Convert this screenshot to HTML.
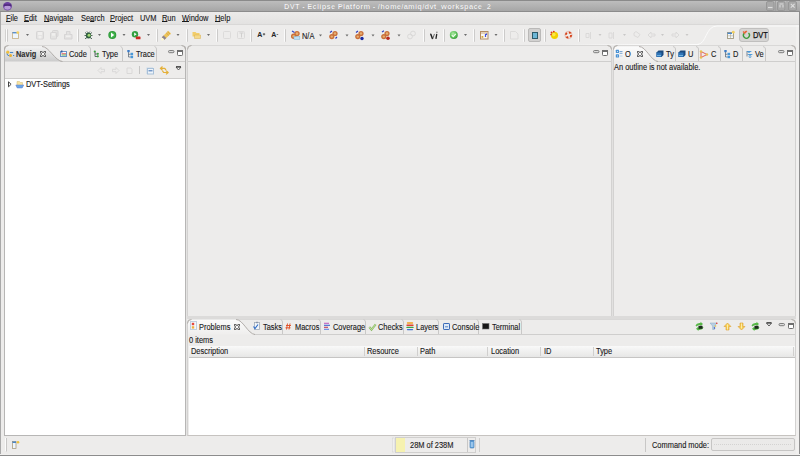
<!DOCTYPE html>
<html><head><meta charset="utf-8">
<style>
*{box-sizing:border-box}
html,body{margin:0;padding:0}
body{width:800px;height:456px;overflow:hidden;position:relative;background:#edeceb;font-family:"Liberation Sans",sans-serif;font-size:7.3px;color:#2a2a2a}
.a{position:absolute}
.t{position:absolute;white-space:pre;line-height:8px;font-size:8.5px;transform:scaleX(0.875);transform-origin:0 0;color:#1a1a1a;-webkit-text-stroke:0.12px #1a1a1a}
u{text-decoration-thickness:1px;text-underline-offset:0px}
#title{left:0;top:0;width:800px;height:12px;background:linear-gradient(#bdbdbd,#a6a6a6);border-top:1px solid #8a8a8a;border-bottom:1px solid #8c8c8c}
#menubar{left:1px;top:12px;width:798px;height:12px;background:linear-gradient(#ecebea,#e3e2e1)}
.sep{position:absolute;width:2px;height:13px;top:28.5px;border-left:1px solid #fbfbfb;border-right:1px solid #cccbca;border-radius:1px}
.panel{position:absolute;border:1px solid #d3d2d1;border-top-color:#d9d8d7;border-radius:4px 4px 0 0}
.tabsep{position:absolute;height:1px;background:#cfcecd}
.vt{position:absolute;width:1px;background:#c9c8c7;top:47px;height:14px;border-radius:1px 1px 0 0}
.white{position:absolute;background:#fff}
svg{position:absolute;left:0;top:0}
</style></head><body>

<!-- window border -->
<div class="a" style="left:0;top:0;width:1px;height:456px;background:#a9a9a9"></div>
<div class="a" style="left:799px;top:0;width:1px;height:456px;background:#8e8e8e"></div>
<div class="a" style="left:0;top:454px;width:800px;height:1px;background:#f0efee"></div><div class="a" style="left:0;top:455px;width:800px;height:1px;background:#8c8c8c"></div><div class="a" style="left:796px;top:25px;width:3px;height:429px;background:#f1f0ef"></div>

<!-- title bar -->
<div id="title" class="a"></div>
<div class="t" style="left:284px;top:3px;font-size:7.5px;font-weight:bold;letter-spacing:0.27px;transform:none;color:#f4f4f4;-webkit-text-stroke:0;text-shadow:0 0 0.6px #6a6a6a">DVT - Eclipse Platform - /home/amiq/dvt_workspace_2</div>

<!-- menubar -->
<div id="menubar" class="a"></div>
<div class="a" style="left:1px;top:24px;width:798px;height:1px;background:#d9d8d7"></div>
<div class="t" style="left:6px;top:14px"><u>F</u>ile</div>
<div class="t" style="left:24px;top:14px"><u>E</u>dit</div>
<div class="t" style="left:44px;top:14px"><u>N</u>avigate</div>
<div class="t" style="left:81px;top:14px">Se<u>a</u>rch</div>
<div class="t" style="left:110px;top:14px"><u>P</u>roject</div>
<div class="t" style="left:140px;top:14px">UVM</div>
<div class="t" style="left:162px;top:14px"><u>R</u>un</div>
<div class="t" style="left:182px;top:14px"><u>W</u>indow</div>
<div class="t" style="left:215px;top:14px"><u>H</u>elp</div>

<!-- toolbar -->
<div class="a" style="left:560px;top:44px;width:139px;height:1px;background:linear-gradient(90deg,rgba(251,251,251,0),#fbfbfb 70%)"></div>
<div class="sep" style="left:5px;width:3px;border-left-color:#d2d1d0;background:#fbfbfb"></div>
<div class="sep" style="left:77px"></div>
<div class="sep" style="left:156px"></div>
<div class="sep" style="left:186px"></div>
<div class="sep" style="left:216px"></div>
<div class="sep" style="left:250px"></div>
<div class="sep" style="left:284px"></div>
<div class="sep" style="left:423px"></div>
<div class="sep" style="left:443px"></div>
<div class="sep" style="left:473px"></div>
<div class="sep" style="left:503px"></div>
<div class="sep" style="left:523px"></div>
<div class="sep" style="left:544px"></div>
<div class="sep" style="left:578px"></div>
<div class="a" style="left:528px;top:28px;width:13px;height:14px;background:#d2d1d0;border:1px solid #bab9b8;border-radius:2px"></div>
<div class="a" style="left:739px;top:28px;width:30px;height:14px;background:#d6d5d4;border:1px solid #c0bfbe;border-radius:3px"></div>
<div class="t" style="left:753px;top:31px;color:#111;-webkit-text-stroke:0.25px #111">DVT</div>
<div class="t" style="left:302px;top:32px">N/A</div>

<!-- navigator panel -->
<div class="panel" style="left:4px;top:45px;width:182px;height:391px;border-color:#b7b6b5;border-top-color:#d9d8d7"></div>
<div class="tabsep" style="left:60px;top:61px;width:125px"></div>
<div class="tabsep" style="left:5px;top:78px;width:180px"></div>
<div class="white" style="left:5px;top:79px;width:180px;height:356px"></div>

<!-- editor panel -->
<div class="panel" style="left:187px;top:45px;width:425px;height:272px"></div>
<div class="tabsep" style="left:188px;top:61px;width:423px"></div>

<!-- outline panel -->
<div class="panel" style="left:613px;top:45px;width:183px;height:272px"></div>
<div class="tabsep" style="left:656px;top:61px;width:139px"></div>

<!-- problems panel -->
<div class="panel" style="left:187px;top:319px;width:609px;height:117px;border-bottom-color:#c6c3c0"></div>
<div class="tabsep" style="left:254px;top:334px;width:541px"></div>
<div class="a" style="left:189px;top:346px;width:606px;height:12px;background:linear-gradient(#f9f9f9,#e7e7e6);border-bottom:1px solid #c6c5c4"></div>
<div class="white" style="left:189px;top:358px;width:606px;height:77px"></div>
<div class="a" style="left:612px;top:50px;width:1px;height:267px;background:#e2e1e0"></div>
<div class="a" style="left:187px;top:316px;width:609px;height:3px;background:#dcdbda"></div>
<div class="a" style="left:186px;top:50px;width:1px;height:386px;background:#e4e3e2"></div>


<!-- ICONS -->
<svg width="800" height="456" viewBox="0 0 800 456">
<!-- eclipse logo -->
<circle cx="7.5" cy="6.3" r="4.3" fill="#6b3fa0"/>
<ellipse cx="7.5" cy="7.6" rx="3.2" ry="2.2" fill="#b69bd8"/>
<rect x="3.5" y="4.6" width="8" height="1" fill="#3e1a66"/>
<!-- window buttons -->
<g fill="#a9a9a9" stroke="#979797" stroke-width="1">
<rect x="766.5" y="1.5" width="7.5" height="9" rx="1.5"/>
<rect x="777.5" y="1.5" width="7.5" height="9" rx="1.5"/>
<rect x="788.5" y="1.5" width="8" height="9" rx="1.5"/>
</g>
<g stroke="#a0a0a0"><path d="M775.5 1v10M787 1v10"/></g>
<g stroke="#dedede" stroke-width="1" fill="none">
<path d="M768 7.5h4.5" stroke-width="1.2"/>
<path d="M779.5 4h4M780 5v2.5M783 5v2.5" stroke-width="1"/>
<path d="M790.8 3.8l3.8 3.8M794.6 3.8l-3.8 3.8" stroke-width="1.1"/>
</g>

<!-- dropdown arrows -->
<g fill="#6c6c6c">
<path d="M26 34h3l-1.5 2z"/><path d="M98 34h3l-1.5 2z"/><path d="M122.5 34h3l-1.5 2z"/><path d="M147 34h3l-1.5 2z"/>
<path d="M176.5 34h3l-1.5 2z"/><path d="M207 34h3l-1.5 2z"/><path d="M319 34.5h3l-1.5 2z"/><path d="M345.5 34.5h3l-1.5 2z"/>
<path d="M371.5 34.5h3l-1.5 2z"/><path d="M397.5 34.5h3l-1.5 2z"/><path d="M464 34h3l-1.5 2z"/><path d="M494.5 34h3l-1.5 2z"/>
</g>
<g fill="#c9c8c7">
<path d="M598.5 34h3l-1.5 2z"/><path d="M623 34h3l-1.5 2z"/><path d="M661 34h3l-1.5 2z"/><path d="M685.5 34h3l-1.5 2z"/>
</g>

<!-- new -->
<rect x="12.5" y="32.5" width="6" height="6" fill="#eef6fc" stroke="#cbb892" stroke-width="0.9"/>
<rect x="12.5" y="32" width="4.5" height="1.4" fill="#5a90cc"/>
<circle cx="17.8" cy="32.6" r="1.4" fill="#f2d060"/>
<!-- save/saveall/print disabled -->
<g fill="#e4e3e2" stroke="#d4d3d2" stroke-width="0.9">
<rect x="36.5" y="31.5" width="7" height="7.5" rx="0.8"/>
<rect x="52.5" y="30.5" width="5.5" height="6" rx="0.8"/>
<rect x="50.5" y="32.5" width="6" height="6.5" rx="0.8"/>
<path d="M64.5 34.5h7.5v4.5h-7.5z"/><path d="M66.5 34.5v-3h3.5v3"/>
</g>
<g fill="#f0efee"><rect x="38" y="32" width="4" height="3"/><rect x="38.5" y="36" width="3" height="2.5"/><rect x="52" y="33.2" width="3" height="2.5"/><rect x="66" y="35.5" width="4.5" height="1.5"/></g>
<!-- debug -->
<g stroke="#2e4a3a" stroke-width="0.8"><path d="M85 32.5l2 1.5M92 32.5l-2 1.5M84.5 35.5h2M92.5 35.5h-2M85 38.8l2-1.3M92 38.8l-2-1.3M87 31.5l1 1.2M90 31.5l-1 1.2"/></g>
<ellipse cx="88.5" cy="35.6" rx="2.6" ry="3" fill="#2f5e40"/>
<circle cx="89" cy="35.3" r="1.5" fill="#a6dc78"/>
<!-- run -->
<circle cx="112.3" cy="35" r="4" fill="#2f9a3a"/>
<circle cx="112.3" cy="35" r="3" fill="#3fb04a"/>
<path d="M111 32.6v4.8l3.2-2.4z" fill="#fff"/>
<!-- ext tools -->
<circle cx="135" cy="34.3" r="3.2" fill="#33a040"/>
<path d="M134.2 32.6v3.4l2.4-1.7z" fill="#fff"/>
<rect x="135.8" y="36.4" width="4.7" height="2.9" rx="0.6" fill="#cc2a22"/>
<!-- wand -->
<path d="M164.5 39.8L161.8 37.2L168.3 30.8L171 33.4Z" fill="#eec55a"/>
<path d="M166.2 32.9l2.7 2.6M167.5 31.6l2.7 2.6" stroke="#c8963a" stroke-width="0.6"/>
<path d="M164.5 39.8L161.8 37.2L163.6 35.4L166.3 38Z" fill="#8c8494"/>
<circle cx="162.3" cy="39.2" r="1.3" fill="#fffad0"/>
<!-- folder -->
<path d="M192.5 32h3l1 1h3v3.5h-7z" fill="#f2cd6a"/>
<path d="M194.5 35h6v3.5h-6z" fill="#f5d98a" stroke="#d9b050" stroke-width="0.5"/>
<!-- disabled 223, 237 -->
<rect x="223.5" y="31.5" width="7" height="7" rx="1" fill="none" stroke="#dcdbda"/>
<rect x="237.5" y="31.5" width="7" height="7" rx="1" fill="none" stroke="#dcdbda"/>
<path d="M239.5 33h4M241.5 33v4.5" stroke="#d0cfce"/>
<!-- dvt cookies -->
<g id="ck">
<circle cx="297" cy="33.6" r="2.7" fill="#c9703c"/><circle cx="297" cy="33.6" r="1.3" fill="#e6b070"/>
<circle cx="293.7" cy="36.2" r="2.7" fill="#c9703c"/><circle cx="293.7" cy="36.2" r="1.3" fill="#e6b070"/>
</g>
<rect x="294" y="36.5" width="5.8" height="2.8" fill="#bfe0f4" stroke="#7eb3d6" stroke-width="0.5"/>
<path d="M292 31l2.5 1.5" stroke="#3048c8" stroke-width="1.2"/>
<!-- cookie icons -->
<g fill="#c9703c">
<circle cx="335" cy="33.5" r="2.6"/><circle cx="331.8" cy="36.6" r="2.6"/>
<circle cx="361" cy="33.5" r="2.6"/><circle cx="357.8" cy="36.6" r="2.6"/>
<circle cx="387" cy="33.5" r="2.6"/><circle cx="383.8" cy="36.6" r="2.6"/>
</g>
<g fill="#e6b070">
<circle cx="335" cy="33.5" r="1.2"/><circle cx="331.8" cy="36.6" r="1.2"/>
<circle cx="361" cy="33.5" r="1.2"/><circle cx="357.8" cy="36.6" r="1.2"/>
<circle cx="387" cy="33.5" r="1.2"/><circle cx="383.8" cy="36.6" r="1.2"/>
</g>
<g stroke="#3040c0" stroke-width="1.2">
<path d="M330 32.5l2-1.5M335.5 38.5l1.5-1.5M356 32.5l2-1.5M382 32l2-1.2"/>
</g>
<circle cx="362" cy="38.5" r="1.7" fill="#1a2aa0"/>
<circle cx="388" cy="38.3" r="1.8" fill="#b8281e"/>
<g fill="none" stroke="#dad9d8"><circle cx="413" cy="33.5" r="2.4"/><circle cx="410" cy="36.5" r="2.4"/></g>
<!-- A+ A- -->
<text x="257.3" y="37.3" font-family="Liberation Sans" font-weight="bold" font-size="7" fill="#262626">A</text>
<path d="M262.8 34.2h2.4M264 33v2.4" stroke="#404040" stroke-width="0.8"/>
<text x="271.3" y="37.3" font-family="Liberation Sans" font-weight="bold" font-size="7" fill="#262626">A</text>
<path d="M276.6 34.5h1.6" stroke="#555" stroke-width="0.8"/>
<!-- vi -->
<g stroke-linecap="round"><path d="M430.8 34.2L432.4 38.4" stroke="#222" stroke-width="1.5"/><path d="M434.3 34.3L432.9 38.4" stroke="#444" stroke-width="0.8"/>
<path d="M436.7 34.3L436 38.4" stroke="#222" stroke-width="1.3"/></g><circle cx="436.9" cy="32.2" r="0.7" fill="#777"/>
<!-- check -->
<defs><radialGradient id="gchk" cx="0.4" cy="0.35" r="0.7"><stop offset="0" stop-color="#b0eca8"/><stop offset="0.6" stop-color="#5cc058"/><stop offset="1" stop-color="#3a9a3a"/></radialGradient></defs>
<circle cx="453.8" cy="35" r="4" fill="url(#gchk)"/>
<path d="M451.8 35.2l1.4 1.4 2.6-2.8" stroke="#f4fff0" stroke-width="1.1" fill="none"/>
<!-- box -->
<rect x="480.5" y="31.5" width="7.5" height="7.5" fill="#fbf7ef" stroke="#b48c64"/>
<path d="M481 33h6.5" stroke="#caa880"/>
<path d="M485.5 34v3M486.5 33.5v1.5" stroke="#4050e0" stroke-width="1.2"/>
<rect x="481.5" y="36" width="1.8" height="1.8" fill="#d8a838"/>
<!-- disabled doc -->
<path d="M510.5 31.5h5l2.5 2.5v5h-7.5z" fill="none" stroke="#dcdbda"/>
<!-- pressed icon -->
<rect x="532" y="32" width="6" height="7" fill="#2c5a6a"/>
<rect x="533" y="33" width="4" height="5" fill="#6cb6d6"/>
<!-- sun -->
<circle cx="554.5" cy="35.3" r="3.6" fill="#f2d000"/>
<circle cx="553.8" cy="34.6" r="1.8" fill="#fbe84a"/>
<circle cx="551.5" cy="32.5" r="0.9" fill="#d83020"/><circle cx="553.8" cy="31.6" r="0.9" fill="#d83020"/><circle cx="551" cy="34.6" r="0.8" fill="#d83020"/>
<!-- lifebuoy -->
<circle cx="568.5" cy="35" r="2.6" fill="none" stroke="#f4e8e0" stroke-width="1.8"/>
<circle cx="568.5" cy="35" r="2.6" fill="none" stroke="#d4421a" stroke-width="1.9" stroke-dasharray="2.1 2"/>
<circle cx="568.5" cy="35" r="3.6" fill="none" stroke="#c84020" stroke-width="0.5" opacity="0.6"/>
<!-- disabled nav icons -->
<g fill="none" stroke="#d9d8d7" stroke-width="0.9">
<path d="M586 33.5h3v4h-3zM590.5 32v7"/>
<path d="M609 33h3v5h-3zM613.5 32v7"/>
<path d="M634 33l2-1.5 4 3-2 3-4-2z"/>
<path d="M648 35l3-3v2h4v2h-4v2z"/>
<path d="M679 35l-3-3v2h-4v2h4v2z"/>
</g>
<!-- perspective curve -->
<path d="M697 44.5C707 44.5 705 26 717 26H799" fill="none" stroke="#fbfbfb" stroke-width="1"/>
<!-- open perspective -->
<rect x="727.5" y="32.5" width="6" height="6" fill="#f4f7fa" stroke="#a09a80" stroke-width="0.9"/>
<path d="M727.5 33.3h4.5" stroke="#4a88cc" stroke-width="1.4"/>
<path d="M730.5 34v4.5M728 35.8h5" stroke="#b0aa90" stroke-width="0.6"/>
<circle cx="733.3" cy="32.2" r="1.4" fill="#f2d060"/>
<!-- dvt persp icon -->
<path d="M744.2 33.2A3 3 0 1 0 748.5 33" fill="none" stroke="#3c9a38" stroke-width="1.3"/>
<path d="M743 31.5l1.8 1.9 0.6-2.5M745.5 32.5l1.5-1.6" stroke="#e8663a" stroke-width="1.1" fill="none"/>
</svg>


<svg width="800" height="456" viewBox="0 0 800 456">
<defs>
<linearGradient id="gsel" x1="0" y1="0" x2="0" y2="1"><stop offset="0" stop-color="#f3f3f3"/><stop offset="1" stop-color="#cbcbcb"/></linearGradient>
<linearGradient id="gsel2" x1="0" y1="0" x2="0" y2="1"><stop offset="0" stop-color="#fbfbfb"/><stop offset="1" stop-color="#efeeed"/></linearGradient>
</defs>
<!-- NAVIGATOR selected tab -->
<path d="M5 61.5V50Q5 46.5 8.5 46.5H42C49 46.5 55 61 62.5 61.5Z" fill="url(#gsel)"/>
<path d="M42 46.5C49 46.5 55 61 62.5 61.5" fill="none" stroke="#a9a5a1" stroke-width="0.9"/>
<!-- tab borders -->
<g fill="none" stroke="#c9c8c7" stroke-width="1">
<path d="M90.5 61V49Q90.5 47 88.5 46.5"/>
<path d="M122.5 61V49Q122.5 47 120.5 46.5"/>
<path d="M156.5 61V49Q156.5 47 154.5 46.5"/>
<path d="M675.5 61V49Q675.5 47 673 46.5"/>
<path d="M698.5 61V49Q698.5 47 696 46.5"/>
<path d="M720.5 61V49Q720.5 47 718 46.5"/>
<path d="M742.5 61V49Q742.5 47 740 46.5"/>
<path d="M765.5 61V49Q765.5 47 763 46.5"/>
<path d="M282.5 334V322Q282.5 320 280.5 319.5"/>
<path d="M320.5 334V322Q320.5 320 318.5 319.5"/>
<path d="M365.5 334V322Q365.5 320 363.5 319.5"/>
<path d="M403.5 334V322Q403.5 320 401.5 319.5"/>
<path d="M438.5 334V322Q438.5 320 436.5 319.5"/>
<path d="M478.5 334V322Q478.5 320 476.5 319.5"/>
<path d="M521.5 334V322Q521.5 320 519.5 319.5"/>
</g>
<!-- OUTLINE selected tab -->
<path d="M614 61.5V50Q614 46.5 617.5 46.5H639C646 46.5 651 61 658 61.5Z" fill="url(#gsel2)"/>
<path d="M639 46.5C646 46.5 651 61 658 61.5" fill="none" stroke="#a9a5a1" stroke-width="0.9"/>
<!-- PROBLEMS selected tab -->
<path d="M188 334.5V323Q188 319.5 191.5 319.5H236C243 319.5 248 334 255 334.5Z" fill="url(#gsel2)"/>
<path d="M236 319.5C243 319.5 248 334 255 334.5" fill="none" stroke="#a9a5a1" stroke-width="0.9"/>

<g fill="none" stroke="#aaa6a2" stroke-width="0.9">
<path d="M4.5 49.5Q4.5 45.5 8.5 45.5"/><path d="M181.5 45.5Q185.5 45.5 185.5 49.5"/>
<path d="M187.5 49.5Q187.5 45.5 191.5 45.5"/><path d="M607.5 45.5Q611.5 45.5 611.5 49.5"/>
<path d="M613.5 49.5Q613.5 45.5 617.5 45.5"/><path d="M791.5 45.5Q795.5 45.5 795.5 49.5"/>
<path d="M187.5 323.5Q187.5 319.5 191.5 319.5"/><path d="M791.5 319.5Q795.5 319.5 795.5 323.5"/>
</g>
<!-- min/max buttons -->
<g fill="#dcdcdc" stroke="#727272" stroke-width="0.9">
<rect x="168.5" y="50.5" width="5.5" height="2.2" rx="1.1"/>
<rect x="593.5" y="50.5" width="5.5" height="2.2" rx="1.1"/>
<rect x="778.5" y="50.5" width="5.5" height="2.2" rx="1.1"/>
<rect x="779" y="323.5" width="5.5" height="2.2" rx="1.1"/>
</g>
<g fill="#fff" stroke="#6e6e6e" stroke-width="1">
<rect x="177.5" y="50.5" width="5" height="5" rx="0.8"/>
<rect x="602.5" y="50.5" width="5" height="5" rx="0.8"/>
<rect x="787.5" y="50.5" width="5" height="5" rx="0.8"/>
<rect x="788.5" y="323.5" width="5" height="5" rx="0.8"/>
</g>
<g fill="#6e6e6e">
<rect x="177" y="50" width="6" height="2"/><rect x="602" y="50" width="6" height="2"/><rect x="787" y="50" width="6" height="2"/><rect x="788" y="323" width="6" height="2"/>

</g>
<path d="M176 67h5l-2.5 3z" fill="#fafafa" stroke="#4a4a4a" stroke-width="0.9" stroke-linejoin="round"/>
<path d="M176 66.8h5" stroke="#3a3a3a" stroke-width="1.1"/>
<path d="M766.5 323h5l-2.5 3z" fill="#fafafa" stroke="#4a4a4a" stroke-width="0.9" stroke-linejoin="round"/>
<path d="M766.5 322.8h5" stroke="#3a3a3a" stroke-width="1.1"/>
<!-- close X icons -->
<defs><g id="cx">
<path d="M0 0h2v1h-1v1h-1zM4 0h2v2h-1v-1h-1zM0 4h1v1h1v1h-2zM5 4h1v2h-2v-1h1z" fill="#666"/>
<path d="M2 0h2v1h-2zM2 5h2v1h-2zM0 2h1v2h-1zM5 2h1v2h-1z" fill="#b4b4b4"/>
<path d="M2 1h2v1h-2zM2 4h2v1h-2zM1 2h1v2h-1zM4 2h1v2h-1z" fill="#7c7c7c"/>
<path d="M1 1h1v1h-1zM4 1h1v1h-1zM1 4h1v1h-1zM4 4h1v1h-1z" fill="#d8d8d8"/>
<path d="M2 2h2v2h-2z" fill="#fafafa"/>
</g></defs>
<use href="#cx" x="40" y="51"/><use href="#cx" x="637" y="51"/><use href="#cx" x="234" y="324"/>
<!-- navig icon -->
<circle cx="7.8" cy="52.2" r="1.6" fill="#f0c040"/>
<path d="M10 52.5h3.2" stroke="#4a88c8" stroke-width="1.1"/>
<path d="M7 53.5q0 2 2 2.2" stroke="#4a88c8" stroke-width="1" fill="none"/>
<circle cx="10.5" cy="55.6" r="1.5" fill="#e8b030"/>
<rect x="13" y="55" width="1.2" height="1" fill="#4a88c8"/>
<!-- code icon -->
<rect x="60.5" y="51.5" width="6" height="5" fill="#f8fbff" stroke="#6a94c8"/>
<rect x="61" y="50.5" width="1.5" height="2" fill="#3a5a9a"/>
<path d="M61.5 53.8h4.5" stroke="#e05050"/><path d="M61.5 55h4.5" stroke="#60b060"/>
<!-- type icon -->
<circle cx="94.8" cy="51.5" r="1.1" fill="#3ca040"/><circle cx="97.8" cy="53.8" r="1.1" fill="#3ca040"/><circle cx="97.8" cy="56.3" r="1.1" fill="#3ca040"/>
<path d="M95 52v4.5h2M95 54h2" stroke="#304040" stroke-width="0.7" fill="none"/>
<!-- trace icon -->
<path d="M128.5 52v5h2M128.5 54.3h2" stroke="#506070" stroke-width="0.7" fill="none"/>
<rect x="127.3" y="50" width="2.4" height="2.2" fill="#3c7cc8"/><rect x="130.5" y="52.8" width="2.6" height="2.4" fill="#4a98d8"/><rect x="130.5" y="55.8" width="2.6" height="2.4" fill="#4a98d8"/>

<!-- nav view toolbar -->
<g fill="none" stroke="#d8d7d6" stroke-width="0.9">
<path d="M98 70.5l3-3v1.8h3.5v2.4h-3.5v1.8z"/>
<path d="M119 70.5l-3-3v1.8h-3.5v2.4h3.5v1.8z"/>
<path d="M127 68h4l1 1.5v4h-5z"/>
</g>
<path d="M139.5 66v8" stroke="#c6c5c4"/>
<rect x="146.5" y="67.5" width="6.5" height="6.5" fill="#c8d8e8"/>
<rect x="147.5" y="68.5" width="6" height="5.5" fill="#eef4fa" stroke="#a8c0d8"/>
<path d="M148.5 70.8h4" stroke="#4a7ab8" stroke-width="1.1"/>
<g fill="none" stroke="#e4b038" stroke-width="1.2" stroke-linejoin="round">
<path d="M162.5 66.5L160.3 68.4L162.5 70.2M160.8 68.4H164.8L166 70.2"/>
<path d="M166 70.6L168.2 72.5L166 74.4M167.7 72.5H163.6L162.4 70.6"/>
</g>

<!-- tree -->
<path d="M8.5 81.8v5l2.6-2.5z" fill="#fff" stroke="#303030" stroke-width="0.9"/>
<path d="M17 81.5h2.5l1 1h2v4h-5.5z" fill="#f8e4a0" stroke="#d0b870" stroke-width="0.5"/>
<path d="M15.8 85h8l-1.6 3h-5z" fill="#6aa8e8" stroke="#6a7ec8" stroke-width="0.5"/>

<!-- outline tabs icons -->
<g fill="#4a92d4">
<rect x="615.8" y="49.8" width="3.2" height="3.2" rx="0.5"/><rect x="615.8" y="54.3" width="3.2" height="3.2" rx="0.5"/>
</g>
<rect x="617" y="51" width="0.9" height="0.9" fill="#e8f4ff"/><rect x="617" y="55.5" width="0.9" height="0.9" fill="#e8f4ff"/>
<path d="M619.5 51.5h3M619.5 53.3h3" stroke="#5a92cc" stroke-width="0.8"/><path d="M619.5 56h3" stroke="#a8c8e8" stroke-width="0.8"/>
<g>
<path d="M656.5 52.5l2-2h5v4.5l-2 2h-5z" fill="#1a4a80"/><path d="M656.5 52.5h5v4.5h-5z" fill="#2f74b8"/><path d="M657 55.5h4" stroke="#7fc0e8" stroke-width="0.8"/>
<path d="M678.5 52.5l2-2h5v4.5l-2 2h-5z" fill="#1a4a80"/><path d="M678.5 52.5h5v4.5h-5z" fill="#2f74b8"/><path d="M679 55.5h4" stroke="#7fc0e8" stroke-width="0.8"/>
</g>
<path d="M701 51.5l6 3-6 3z" fill="none" stroke="#e04030" stroke-width="0.8"/>
<circle cx="701" cy="51.5" r="1.2" fill="#e8c050"/><circle cx="707" cy="54.5" r="1.2" fill="#e8c050"/><circle cx="701" cy="57.5" r="1.2" fill="#e8c050"/>
<path d="M725.5 52v5h2M725.5 54.3h2" stroke="#506070" stroke-width="0.7" fill="none"/>
<rect x="724.3" y="50" width="2.4" height="2.2" fill="#3c7cc8"/><rect x="727.5" y="52.8" width="2.6" height="2.4" fill="#4a98d8"/><rect x="727.5" y="55.8" width="2.6" height="2.4" fill="#4a98d8"/>
<path d="M746 51h6l-3 2z M747 54h6l-3 2z M748 56.5h4l-2 1.5z" fill="#4a98d8"/>
<path d="M747 51.5v5" stroke="#506070" stroke-width="0.7"/>

<!-- problems tab icons -->
<rect x="190.5" y="321.5" width="6" height="8" fill="#f4f7fa" stroke="#c0d0e0"/>
<rect x="191.8" y="322.8" width="2.4" height="2.4" fill="#e4483c"/><rect x="191.8" y="326.2" width="2.4" height="2.4" fill="#f2b040"/>
<rect x="254.5" y="322.5" width="5" height="7" fill="#f2f6fa" stroke="#a0aab8" stroke-width="0.8"/>
<rect x="256" y="321.8" width="2" height="1.4" fill="#8a96a8"/>
<path d="M253.5 326.5l1.5 2 3-4" stroke="#2a6ac8" stroke-width="1.1" fill="none"/>
<g stroke="#e04a20" stroke-width="0.9"><path d="M287.5 323.5l-1 6M290 323.5l-1 6M286 325.5h5M285.5 327.8h5"/></g>
<g stroke-width="1.1"><path d="M324 323.3h5" stroke="#c060c0"/><path d="M324 325.3h6" stroke="#4060d0"/><path d="M324 327.3h4" stroke="#c04060"/><path d="M324 329.3h5" stroke="#6080e0"/></g>
<path d="M369.3 327l2.2 2.6 4.2-5.2" stroke="#88b860" stroke-width="2" fill="none"/><path d="M369.3 327l2.2 2.6 4.2-5.2" stroke="#d8f0c0" stroke-width="0.7" fill="none"/>
<g stroke-width="1.4" stroke-linecap="round"><path d="M407.5 323h5" stroke="#f0a020"/><path d="M407 325.2h6" stroke="#e04030"/><path d="M407 327.4h6" stroke="#40a040"/><path d="M407.5 329.6h5" stroke="#4070d0"/></g>
<rect x="443.5" y="323.5" width="6" height="6" rx="0.6" fill="#dce8f6" stroke="#3a6ab8"/><path d="M445 326.8h3" stroke="#3a6ab8" stroke-width="0.8"/>
<rect x="482.5" y="323.5" width="6.5" height="5.5" fill="#161616" stroke="#707070" stroke-width="0.6"/>

<!-- problems view toolbar -->
<g id="garr">
<path d="M695.5 325.5q1-3 5-2.5v-1.2l2.5 2.3-2.5 2.2v-1.2q-2.5-0.3-4 1.5z" fill="#58b848"/>
<path d="M703.5 327.5q-1 2.8-5 2.4v1l-2.5-2.2 2.5-2.2v1.2q2.5 0.3 4-1.3z" fill="#58b848"/>
<rect x="698.5" y="325.8" width="4" height="3" fill="#1e2a1e"/>
</g>
<use href="#garr" x="56" y="0"/>
<path d="M710 323h7l-2.6 3v3.5h-1.8v-3.5z" fill="#b8d0e4" stroke="#8aa8c4" stroke-width="0.5"/>
<circle cx="716.8" cy="323.2" r="0.8" fill="#e03030"/><circle cx="715.5" cy="326" r="0.8" fill="#e0c030"/><circle cx="714.5" cy="328" r="0.8" fill="#3050c0"/>
<path d="M727.5 323l3.5 3.5h-2v3.5h-3v-3.5h-2z" fill="#f6cf55" stroke="#dda030" stroke-width="0.6"/>
<path d="M727.5 324.5v5" stroke="#fff4c0" stroke-width="0.8"/>
<path d="M741.5 330l3.5-3.5h-2v-3.5h-3v3.5h-2z" fill="#f6cf55" stroke="#dda030" stroke-width="0.6"/>
<path d="M741.5 323.5v5" stroke="#fff4c0" stroke-width="0.8"/>
<!-- table header column separators -->
<g stroke="#d0cfce"><path d="M364.5 347v9M417.5 347v9M487.5 347v9M540.5 347v9M593.5 347v9M793.5 347v9"/></g>

<!-- status bar -->
<path d="M5.5 438v13" stroke="#fbfbfb"/><path d="M6.5 438v13.5" stroke="#c8c7c6"/>
<rect x="12.5" y="441.5" width="3.5" height="7" fill="#eef6fc" stroke="#a09070" stroke-width="0.7"/>
<rect x="12.5" y="441.5" width="3.5" height="1.5" fill="#4a86c8"/>
<circle cx="18" cy="442.3" r="1.3" fill="#e8c040"/>
<rect x="392.5" y="438" width="1.5" height="14" fill="#fafafa" stroke="#d0cfce" stroke-width="0.5"/>
<rect x="395.5" y="437.5" width="80" height="15" fill="none" stroke="#d0cfce"/>
<rect x="396" y="438" width="9" height="14" fill="#f6f2b0"/>
<path d="M467.5 438v14" stroke="#c8c7c6"/>
<rect x="470" y="441" width="4" height="7" rx="0.8" fill="#6aaae0" stroke="#3070b0" stroke-width="0.6"/>
<path d="M469.5 440.5h5" stroke="#3a78b8" stroke-width="0.8"/><path d="M471.3 442v5M472.8 442v5" stroke="#e8f4ff" stroke-width="0.5"/>
<path d="M479.5 438v14" stroke="#d0cfce"/>
<path d="M645.5 438v14" stroke="#c8c7c6"/>
<rect x="711.5" y="438.5" width="83" height="12" rx="1.5" fill="#ebeae9" stroke="#c6c5c4"/>
<path d="M714 444.5h78" stroke="#d4d3d2" stroke-dasharray="1 1"/>
</svg>

<!-- panel texts -->
<div class="t" style="left:16px;top:50px;font-weight:bold;color:#333">Navig</div>
<div class="t" style="left:69px;top:50px">Code</div>
<div class="t" style="left:102px;top:50px">Type</div>
<div class="t" style="left:136px;top:50px">Trace</div>
<div class="t" style="left:26px;top:80px">DVT-Settings</div>
<div class="t" style="left:625px;top:50px">O</div>
<div class="t" style="left:666px;top:50px">Ty</div>
<div class="t" style="left:688px;top:50px">U</div>
<div class="t" style="left:710.5px;top:50px">C</div>
<div class="t" style="left:733px;top:50px">D</div>
<div class="t" style="left:755px;top:50px">Ve</div>
<div class="t" style="left:614px;top:63px">An outline is not available.</div>
<div class="t" style="left:199px;top:323px">Problems</div>
<div class="t" style="left:263px;top:323px">Tasks</div>
<div class="t" style="left:295px;top:323px">Macros</div>
<div class="t" style="left:333px;top:323px">Coverage</div>
<div class="t" style="left:378px;top:323px">Checks</div>
<div class="t" style="left:416px;top:323px">Layers</div>
<div class="t" style="left:452px;top:323px">Console</div>
<div class="t" style="left:492px;top:323px">Terminal</div>
<div class="t" style="left:189px;top:336px">0 items</div>
<div class="t" style="left:191px;top:347px">Description</div>
<div class="t" style="left:367px;top:347px">Resource</div>
<div class="t" style="left:420px;top:347px">Path</div>
<div class="t" style="left:491px;top:347px">Location</div>
<div class="t" style="left:544px;top:347px">ID</div>
<div class="t" style="left:596px;top:347px">Type</div>
<div class="t" style="left:410px;top:441px">28M of 238M</div>
<div class="t" style="left:652px;top:441px">Command mode:</div>

</body></html>
